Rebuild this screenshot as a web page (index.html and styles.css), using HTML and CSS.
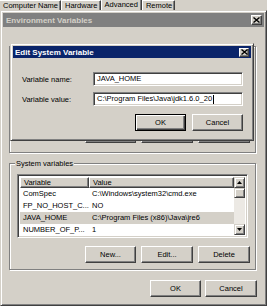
FILE: index.html
```html
<!DOCTYPE html>
<html>
<head>
<meta charset="utf-8">
<link rel="stylesheet" href="styles.css">
</head>
<body>
<div class="tabs">
  <div class="tab tab-cn">Computer Name</div>
  <div class="tab tab-hw">Hardware</div>
  <div class="tab tab-adv active">Advanced</div>
  <div class="tab tab-rm">Remote</div>
</div>

<div class="envwin">
  <div class="titlebar inactive">
    <span class="title-text">Environment Variables</span>
    <span class="close close-env"><svg width="7" height="6" viewBox="0 0 7 6"><path d="M0.5 0.5 L6.5 5.5 M6.5 0.5 L0.5 5.5" stroke="#000" stroke-width="1.4" fill="none"/></svg></span>
  </div>
  <div class="envbody">
    <div class="group group-user">
      <div class="list list-user"></div>
      <div class="btnrow grp-btns">
        <button class="btn">New...</button>
        <button class="btn">Edit...</button>
        <button class="btn">Delete</button>
      </div>
    </div>

    <div class="group group-sys">
      <div class="group-label">System variables</div>
      <div class="list list-sys">
        <div class="table">
          <div class="thead">
            <div class="th col-var">Variable</div>
            <div class="th col-val">Value</div>
          </div>
          <div class="tr"><div class="td col-var">ComSpec</div><div class="td col-val">C:\Windows\system32\cmd.exe</div></div>
          <div class="tr"><div class="td col-var">FP_NO_HOST_C...</div><div class="td col-val">NO</div></div>
          <div class="tr selected"><div class="td col-var">JAVA_HOME</div><div class="td col-val">C:\Program Files (x86)\Java\jre6</div></div>
          <div class="tr"><div class="td col-var">NUMBER_OF_P...</div><div class="td col-val">1</div></div>
        </div>
        <div class="vscroll">
          <div class="sbtn"><svg width="5" height="3" viewBox="0 0 5 3"><path d="M2.5 0 L5 3 L0 3 Z" fill="#000"/></svg></div>
          <div class="sthumb"></div>
          <div class="strack"></div>
          <div class="sbtn"><svg width="5" height="3" viewBox="0 0 5 3"><path d="M0 0 L5 0 L2.5 3 Z" fill="#000"/></svg></div>
        </div>
      </div>
      <div class="btnrow grp-btns">
        <button class="btn">New...</button>
        <button class="btn">Edit...</button>
        <button class="btn">Delete</button>
      </div>
    </div>

    <div class="btnrow main-btns">
      <button class="btn">OK</button>
      <button class="btn">Cancel</button>
    </div>
  </div>

  <div class="dialog">
    <div class="titlebar active-title">
      <span class="title-text">Edit System Variable</span>
      <span class="close close-dlg"><svg width="7" height="6" viewBox="0 0 7 6"><path d="M0.5 0.5 L6.5 5.5 M6.5 0.5 L0.5 5.5" stroke="#000" stroke-width="1.4" fill="none"/></svg></span>
    </div>
    <div class="dlgbody">
      <div class="fields">
        <label class="flabel">Variable name:</label>
        <div class="input">JAVA_HOME</div>
        <label class="flabel">Variable value:</label>
        <div class="input">C:\Program Files\Java\jdk1.6.0_20<span class="caret"></span></div>
      </div>
      <div class="btnrow dlg-btns">
        <button class="btn default">OK</button>
        <button class="btn">Cancel</button>
      </div>
    </div>
  </div>
</div>
</body>
</html>
```

FILE: styles.css
```css
* { box-sizing: border-box; }
html, body { margin: 0; padding: 0; }
body {
  width: 267px;
  height: 306px;
  overflow: hidden;
  position: relative;
  background: #d4d0c8;
  font-family: "Liberation Sans", Arial, sans-serif;
  font-size: 7.5px;
  color: #000;
}

/* tabs of the System Properties window behind */
.tabs {
  display: flex;
  height: 12px;
  align-items: flex-end;
}
.tab {
  height: 12px;
  line-height: 10px;
  padding: 0 2px 0 3px;
  border-left: 1px solid #fff;
  border-top: 1px solid #fff;
  border-right: 1px solid #404040;
  box-shadow: inset -1px 0 #808080;
  white-space: nowrap;
}
.tab-cn { border-left: none; }
.tab.active { height: 13px; line-height: 10px; padding: 0 3px; }

/* Environment Variables window */
.envwin {
  position: absolute;
  left: 0;
  top: 10px;
  width: 267px;
  height: 296px;
  border: 1px solid;
  border-color: #d4d0c8 #404040 #404040 #d4d0c8;
  box-shadow: inset 1px 1px #fff, inset -1px -1px #808080;
  padding: 2px;
  background: #d4d0c8;
  display: flex;
  flex-direction: column;
}
.titlebar {
  height: 14px;
  flex: none;
  display: flex;
  align-items: center;
  justify-content: space-between;
  padding: 0 2px 0 3px;
  font-weight: bold;
  font-size: 8px;
  white-space: nowrap;
}
.titlebar.inactive { background: #808080; color: #d4d0c8; }
.titlebar.active-title { background: #0a246a; color: #fff; height: 12px; padding: 0 2px 0 2px; }
.close {
  width: 11px;
  height: 10px;
  background: #d4d0c8;
  border: 1px solid;
  border-color: #fff #404040 #404040 #fff;
  box-shadow: inset -1px -1px #808080;
  display: flex;
  align-items: center;
  justify-content: center;
}
.close-dlg { width: 10px; height: 9px; }

.envbody {
  flex: 1;
  padding: 19px 8px 0 6px;
  display: flex;
  flex-direction: column;
}

.group {
  position: relative;
  border: 1px solid #808080;
  box-shadow: 1px 1px #fff, inset 1px 1px #fff;
  display: flex;
  flex-direction: column;
}
.group-label {
  position: absolute;
  left: 5px;
  top: -5px;
  padding: 0 1px;
  background: #d4d0c8;
  line-height: 9px;
  white-space: nowrap;
}
.group-user { height: 107px; padding: 10px 7px 9px 7px; }
.group-sys { height: 107px; margin-top: 10px; padding: 10px 7px 6px 7px; }

.list {
  border: 1px solid;
  border-color: #808080 #fff #fff #808080;
  box-shadow: inset 1px 1px #404040, inset -1px -1px #d4d0c8;
  background: #fff;
  padding: 2px 2px 2px 2px;
}
.list-user { flex: 1; }
.list-sys { height: 64px; display: flex; }

.table { flex: 1; display: flex; flex-direction: column; }
.thead { display: flex; height: 11px; flex: none; }
.th {
  background: #d4d0c8;
  border: 1px solid;
  border-color: #fff #404040 #404040 #fff;
  box-shadow: inset -1px -1px #808080;
  line-height: 9px;
  padding-left: 3px;
}
.th.col-var { width: 69px; }
.th.col-val { flex: 1; }
.tr { display: flex; height: 12px; line-height: 12px; }
.td { white-space: nowrap; overflow: hidden; }
.td.col-var { width: 69px; padding-left: 3px; }
.td.col-val { flex: 1; padding-left: 3px; }
.tr.selected { background: #d4d0c8; }

.vscroll {
  width: 11px;
  flex: none;
  display: flex;
  flex-direction: column;
  background: #ece9e4;
}
.sbtn, .sthumb {
  height: 11px;
  flex: none;
  background: #d4d0c8;
  border: 1px solid;
  border-color: #d4d0c8 #404040 #404040 #d4d0c8;
  box-shadow: inset 1px 1px #fff, inset -1px -1px #808080;
  display: flex;
  align-items: center;
  justify-content: center;
}
.sthumb { height: 10px; }
.strack { flex: 1; }

.btnrow { display: flex; justify-content: flex-end; }
.btn {
  width: 51px;
  height: 17px;
  padding: 0;
  margin: 0;
  font-family: "Liberation Sans", Arial, sans-serif;
  font-size: 7.5px;
  color: #000;
  background: #d4d0c8;
  border: 1px solid;
  border-color: #fff #404040 #404040 #fff;
  box-shadow: inset -1px -1px #808080;
  border-radius: 0;
}
.grp-btns { gap: 5px; margin-top: 8px; margin-right: -2px; flex: none; }
.grp-btns .btn { width: 52px; }
.grp-btns .btn:first-child { width: 51px; }
.main-btns { gap: 4px; margin-top: 10px; margin-right: -1px; }
.main-btns .btn:last-child { width: 52px; }

/* Edit System Variable dialog (window on top) */
.dialog {
  position: absolute;
  left: 9px;
  top: 32px;
  width: 244px;
  height: 98px;
  border: 1px solid;
  border-color: #d4d0c8 #404040 #404040 #d4d0c8;
  box-shadow: inset 1px 1px #fff, inset -1px -1px #808080;
  padding: 2px;
  background: #d4d0c8;
  display: flex;
  flex-direction: column;
}
.dlgbody {
  flex: 1;
  padding: 14px 8px 7px 9px;
  display: flex;
  flex-direction: column;
}
.fields {
  display: grid;
  grid-template-columns: 71px 1fr;
  row-gap: 6px;
  align-items: center;
}
.flabel { white-space: nowrap; }
.input {
  height: 14px;
  line-height: 10px;
  padding: 0 3px;
  background: #fff;
  border: 1px solid;
  border-color: #808080 #fff #fff #808080;
  box-shadow: inset 1px 1px #404040, inset -1px -1px #d4d0c8;
  white-space: nowrap;
  overflow: hidden;
  display: flex;
  align-items: center;
}
.caret { display: inline-block; width: 1px; height: 9px; background: #000; margin-left: 1px; }
.dlg-btns { gap: 6px; margin-top: 8px; }
.btn.default {
  border: 1px solid #000;
  box-shadow: inset 1px 1px #fff, inset -1px -1px #404040, inset -2px -2px #808080;
}
```
